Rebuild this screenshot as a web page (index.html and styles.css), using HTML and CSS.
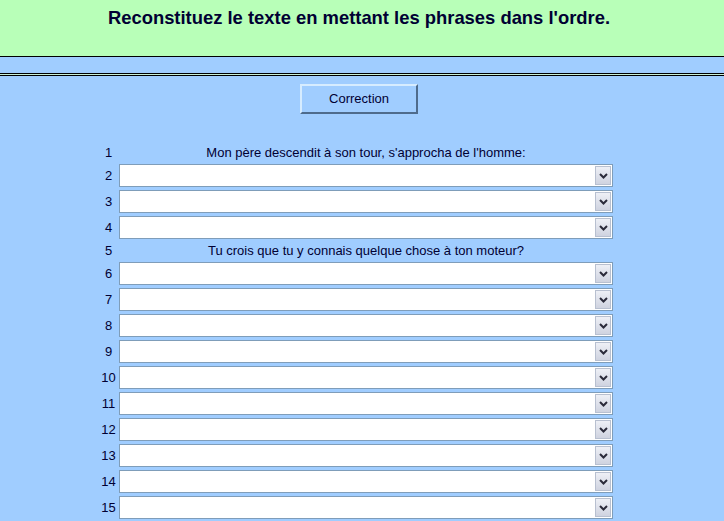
FILE: index.html
```html
<!DOCTYPE html>
<html lang="fr">
<head>
<meta charset="utf-8">
<title>Reconstituez le texte</title>
<link rel="stylesheet" href="styles.css">
</head>
<body>
<div class="header">
  <h1 class="title">Reconstituez le texte en mettant les phrases dans l'ordre.</h1>
</div>
<div class="band"></div>
<div class="double"></div>
<div class="main">
  <div class="actions"><button class="btn" type="button">Correction</button></div>
  <div class="list">
    <div class="num text">1</div><div class="phrase">Mon père descendit à son tour, s'approcha de l'homme:</div>
    <div class="num">2</div><div class="sel"><span class="arrow"><svg width="9" height="6" viewBox="0 0 9 6"><path d="M1 1 L4.5 4.5 L8 1" fill="none" stroke="#2b2b3a" stroke-width="2"/></svg></span></div>
    <div class="num">3</div><div class="sel"><span class="arrow"><svg width="9" height="6" viewBox="0 0 9 6"><path d="M1 1 L4.5 4.5 L8 1" fill="none" stroke="#2b2b3a" stroke-width="2"/></svg></span></div>
    <div class="num">4</div><div class="sel"><span class="arrow"><svg width="9" height="6" viewBox="0 0 9 6"><path d="M1 1 L4.5 4.5 L8 1" fill="none" stroke="#2b2b3a" stroke-width="2"/></svg></span></div>
    <div class="num text">5</div><div class="phrase">Tu crois que tu y connais quelque chose à ton moteur?</div>
    <div class="num">6</div><div class="sel"><span class="arrow"><svg width="9" height="6" viewBox="0 0 9 6"><path d="M1 1 L4.5 4.5 L8 1" fill="none" stroke="#2b2b3a" stroke-width="2"/></svg></span></div>
    <div class="num">7</div><div class="sel"><span class="arrow"><svg width="9" height="6" viewBox="0 0 9 6"><path d="M1 1 L4.5 4.5 L8 1" fill="none" stroke="#2b2b3a" stroke-width="2"/></svg></span></div>
    <div class="num">8</div><div class="sel"><span class="arrow"><svg width="9" height="6" viewBox="0 0 9 6"><path d="M1 1 L4.5 4.5 L8 1" fill="none" stroke="#2b2b3a" stroke-width="2"/></svg></span></div>
    <div class="num">9</div><div class="sel"><span class="arrow"><svg width="9" height="6" viewBox="0 0 9 6"><path d="M1 1 L4.5 4.5 L8 1" fill="none" stroke="#2b2b3a" stroke-width="2"/></svg></span></div>
    <div class="num">10</div><div class="sel"><span class="arrow"><svg width="9" height="6" viewBox="0 0 9 6"><path d="M1 1 L4.5 4.5 L8 1" fill="none" stroke="#2b2b3a" stroke-width="2"/></svg></span></div>
    <div class="num">11</div><div class="sel"><span class="arrow"><svg width="9" height="6" viewBox="0 0 9 6"><path d="M1 1 L4.5 4.5 L8 1" fill="none" stroke="#2b2b3a" stroke-width="2"/></svg></span></div>
    <div class="num">12</div><div class="sel"><span class="arrow"><svg width="9" height="6" viewBox="0 0 9 6"><path d="M1 1 L4.5 4.5 L8 1" fill="none" stroke="#2b2b3a" stroke-width="2"/></svg></span></div>
    <div class="num">13</div><div class="sel"><span class="arrow"><svg width="9" height="6" viewBox="0 0 9 6"><path d="M1 1 L4.5 4.5 L8 1" fill="none" stroke="#2b2b3a" stroke-width="2"/></svg></span></div>
    <div class="num">14</div><div class="sel"><span class="arrow"><svg width="9" height="6" viewBox="0 0 9 6"><path d="M1 1 L4.5 4.5 L8 1" fill="none" stroke="#2b2b3a" stroke-width="2"/></svg></span></div>
    <div class="num">15</div><div class="sel"><span class="arrow"><svg width="9" height="6" viewBox="0 0 9 6"><path d="M1 1 L4.5 4.5 L8 1" fill="none" stroke="#2b2b3a" stroke-width="2"/></svg></span></div>
  </div>
</div>
</body>
</html>
```
FILE: styles.css
```css
html, body {
  margin: 0;
  padding: 0;
  background: #a0cdff;
  font-family: "Liberation Sans", Arial, sans-serif;
  color: #000033;
  overflow: hidden;
}
.header {
  background: #b8ffb8;
  border-bottom: 1px solid #000;
  box-sizing: border-box;
  height: 57px;
}
.title {
  margin: 0;
  padding-top: 7px;
  padding-right: 6px;
  font-size: 18.4px;
  font-weight: bold;
  text-align: center;
  line-height: 21px;
}
.band {
  height: 16px;
}
.double {
  height: 1px;
  border-top: 1px solid #000;
  border-bottom: 1px solid #000;
  background: #c8f0d8;
}
.main {
  padding-top: 8px;
}
.actions {
  display: flex;
  justify-content: center;
}
.btn {
  width: 118px;
  height: 30px;
  background: #a0cdff;
  border: 2px solid;
  border-color: #d6ecff #4e6b8c #4e6b8c #d6ecff;
  font-family: "Liberation Sans", Arial, sans-serif;
  font-size: 13px;
  color: #000033;
  padding: 0 0 2px 0;
  position: relative;
  left: -3px;
}
.list {
  margin-top: 30px;
  margin-left: 98px;
  width: 515px;
  display: grid;
  grid-template-columns: 21px 494px;
  row-gap: 3px;
}
.num {
  font-size: 13px;
  line-height: 23px;
  height: 23px;
  text-align: center;
}
.num.text, .phrase {
  height: 17px;
  line-height: 17px;
}
.phrase {
  font-size: 13px;
  text-align: center;
}
.sel {
  height: 23px;
  box-sizing: border-box;
  border: 1px solid #7f9db9;
  background: #fff;
  display: flex;
  justify-content: flex-end;
  align-items: stretch;
  padding: 1px;
}
.arrow {
  width: 16px;
  box-sizing: border-box;
  border: 1px solid #b8c0d0;
  background: linear-gradient(#eef0f6, #cfd3e0);
  display: flex;
  align-items: center;
  justify-content: center;
}
```
